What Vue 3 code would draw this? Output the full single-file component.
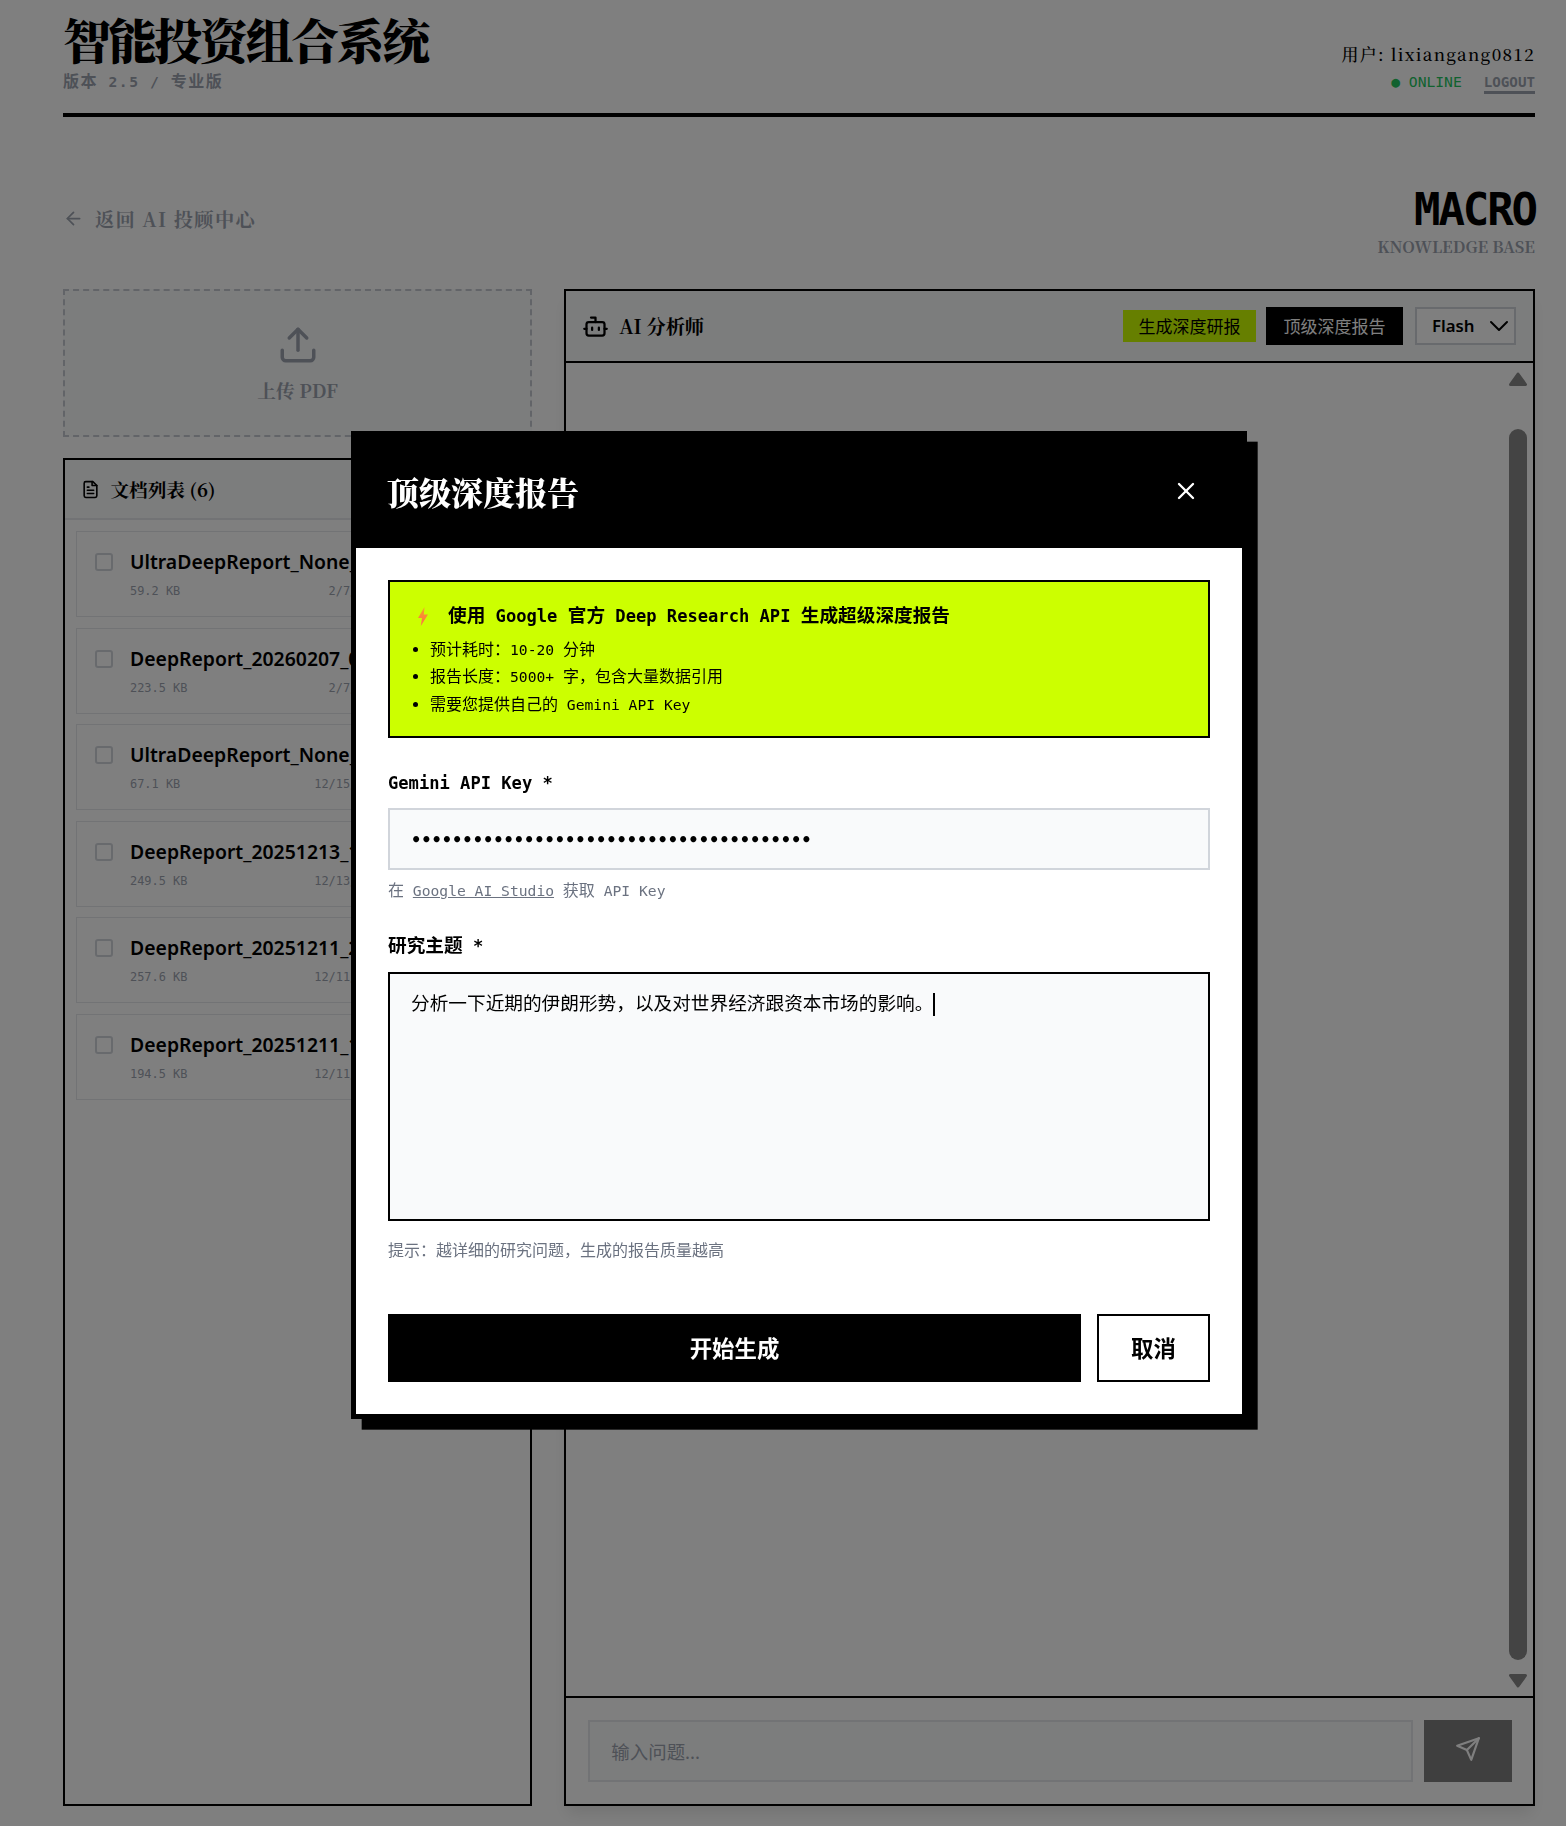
<script setup>
import { ref } from 'vue'

const docs = [
  { name: 'UltraDeepReport_None_20260207.pdf', size: '59.2 KB', date: '2/7/2026' },
  { name: 'DeepReport_20260207_093015.pdf', size: '223.5 KB', date: '2/7/2026' },
  { name: 'UltraDeepReport_None_20251215.pdf', size: '67.1 KB', date: '12/15/2025' },
  { name: 'DeepReport_20251213_181244.pdf', size: '249.5 KB', date: '12/13/2025' },
  { name: 'DeepReport_20251211_204530.pdf', size: '257.6 KB', date: '12/11/2025' },
  { name: 'DeepReport_20251211_101822.pdf', size: '194.5 KB', date: '12/11/2025' }
]

const apiKey = ref('AIzaSyD7x2mKq9vLw3nRt8bYc5pHf1sGj6uEo4A')
const notes = [
  ['预计耗时：', '10-20 ', '分钟'],
  ['报告长度：', '5000+ ', '字，包含大量数据引用'],
  ['需要您提供自己的', ' Gemini API Key', '']
]
</script>

<template>
  <div class="page">
    <header class="top">
      <div>
        <h1 class="brand">智能投资组合系统</h1>
        <div class="version">版本<span class="lat"> 2.5 / </span>专业版</div>
      </div>
      <div class="account">
        <div class="user">用户: lixiangang0812</div>
        <div class="status">
          <span class="online">● ONLINE</span>
          <a class="logout">LOGOUT</a>
        </div>
      </div>
    </header>

    <div class="subhead">
      <a class="back">
        <svg width="21" height="21" viewBox="0 0 24 24" fill="none" stroke="currentColor" stroke-width="2" stroke-linecap="round" stroke-linejoin="round"><path d="M19 12H5" /><path d="M12 19l-7-7 7-7" /></svg>
        返回 AI 投顾中心
      </a>
      <div class="macro">
        <div class="macro-title">MACRO</div>
        <div class="macro-sub">KNOWLEDGE BASE</div>
      </div>
    </div>

    <main class="grid">
      <section class="left">
        <div class="upload">
          <svg width="42" height="42" viewBox="0 0 24 24" fill="none" stroke="currentColor" stroke-width="2" stroke-linecap="round" stroke-linejoin="round"><path d="M12 3v12" /><path d="M17 8l-5-5-5 5" /><path d="M21 15v4a2 2 0 0 1-2 2H5a2 2 0 0 1-2-2v-4" /></svg>
          <span>上传 PDF</span>
        </div>
        <div class="docs">
          <div class="docs-head">
            <svg width="19" height="19" viewBox="0 0 24 24" fill="none" stroke="currentColor" stroke-width="2" stroke-linecap="round" stroke-linejoin="round"><path d="M15 2H6a2 2 0 0 0-2 2v16a2 2 0 0 0 2 2h12a2 2 0 0 0 2-2V7z" /><path d="M14 2v5h6" /><path d="M8 13h8" /><path d="M8 17h8" /><path d="M8 9h2" /></svg>
            <span>文档列表 (6)</span>
          </div>
          <div class="doc-list">
            <div v-for="doc in docs" :key="doc.name" class="doc">
              <span class="check"></span>
              <div class="doc-body">
                <div class="doc-name">{{ doc.name }}</div>
                <div class="doc-meta"><span>{{ doc.size }}</span><span>{{ doc.date }}</span></div>
              </div>
            </div>
          </div>
        </div>
      </section>

      <section class="chat">
        <div class="chat-head">
          <div class="chat-title">
            <svg width="27" height="27" viewBox="0 0 24 24" fill="none" stroke="currentColor" stroke-width="2" stroke-linecap="round" stroke-linejoin="round"><path d="M12 8V4H8" /><rect x="4" y="8" width="16" height="12" rx="2" /><path d="M2 14h2" /><path d="M20 14h2" /><path d="M15 13v2" /><path d="M9 13v2" /></svg>
            <span>AI 分析师</span>
          </div>
          <div class="chat-actions">
            <button class="btn-lime">生成深度研报</button>
            <button class="btn-black">顶级深度报告</button>
            <div class="model">
              <span>Flash</span>
              <svg width="24" height="24" viewBox="0 0 24 24" fill="none" stroke="#000" stroke-width="2" stroke-linecap="round" stroke-linejoin="round"><path d="M4 8l8 8 8-8" /></svg>
            </div>
          </div>
        </div>
        <div class="messages">
          <div class="scrollbar">
            <svg width="18" height="14" viewBox="0 0 18 14"><path d="M9 2l7.5 10.5h-15z" fill="#888" stroke="#888" stroke-width="3" stroke-linejoin="round" /></svg>
            <span class="thumb"></span>
            <svg width="18" height="14" viewBox="0 0 18 14"><path d="M9 12L1.5 1.5h15z" fill="#888" stroke="#888" stroke-width="3" stroke-linejoin="round" /></svg>
          </div>
        </div>
        <div class="chat-input">
          <div class="ask">输入问题...</div>
          <button class="send">
            <svg width="26" height="26" viewBox="0 0 24 24" fill="none" stroke="currentColor" stroke-width="2" stroke-linecap="round" stroke-linejoin="round"><path d="M22 2L15 22l-4-9-9-4z" /><path d="M22 2L11 13" /></svg>
          </button>
        </div>
      </section>
    </main>

    <div class="overlay">
      <div class="modal">
        <div class="modal-head">
          <h2>顶级深度报告</h2>
          <svg width="28" height="28" viewBox="0 0 24 24" fill="none" stroke="#fff" stroke-width="2" stroke-linecap="round" stroke-linejoin="round"><path d="M18 6L6 18" /><path d="M6 6l12 12" /></svg>
        </div>
        <div class="modal-body">
          <div class="callout">
            <div class="callout-title">
              <svg width="12" height="19" viewBox="0 0 12 19">
                <defs><linearGradient id="bolt" x1="0" y1="0" x2="0" y2="1"><stop offset="0" stop-color="#f5a623" /><stop offset="1" stop-color="#ff6b4a" /></linearGradient></defs>
                <path d="M7.5 0L1 11h4L3.8 19 11 7.5H6.8z" fill="url(#bolt)" />
              </svg>
              <span>使用<span class="lat"> Google </span>官方<span class="lat"> Deep Research API </span>生成超级深度报告</span>
            </div>
            <ul>
              <li v-for="note in notes" :key="note[1]">{{ note[0] }}<span class="lat">{{ note[1] }}</span>{{ note[2] }}</li>
            </ul>
          </div>

          <label class="field-label"><span class="lat">Gemini API Key *</span></label>
          <input v-model="apiKey" class="key" type="password" />
          <div class="help">在<span class="lat">&nbsp;</span><a class="lat">Google AI Studio</a><span class="lat">&nbsp;</span>获取<span class="lat"> API Key</span></div>

          <label class="field-label topic-label">研究主题<span class="lat"> *</span></label>
          <div class="topic">分析一下近期的伊朗形势，以及对世界经济跟资本市场的影响。<i class="caret"></i></div>
          <div class="hint">提示：越详细的研究问题，生成的报告质量越高</div>

          <div class="modal-actions">
            <button class="start">开始生成</button>
            <button class="cancel">取消</button>
          </div>
        </div>
      </div>
    </div>
  </div>
</template>

<style scoped>
.page {
  height: 1826px;
  box-sizing: border-box;
  padding: 0 31px 20px 63px;
  overflow: hidden;
  background: #fff;
  font-family: "Noto Sans", "Noto Sans CJK SC", sans-serif;
  color: #000;
}

.top {
  display: flex;
  justify-content: space-between;
  align-items: flex-end;
  height: 113px;
  border-bottom: 4px solid #000;
}

.brand {
  margin: 12px 0 0;
  font-family: "Noto Serif CJK SC", "Liberation Serif", "Noto Sans CJK SC", serif;
  font-size: 48px;
  line-height: 54px;
  font-weight: 900;
  letter-spacing: -2.4px;
}

.version {
  margin-top: 6px;
  font-family: "DejaVu Sans Mono", "Noto Sans CJK SC", monospace;
  font-size: 16px;
  line-height: 20px;
  font-weight: 700;
  color: #9ca3af;
  letter-spacing: 1.55px;
  padding-bottom: 21px;
}

.lat {
  font-size: 0.9167em;
}

.account {
  text-align: right;
  padding-bottom: 19px;
}

.user {
  font-family: "Noto Serif CJK SC", "Liberation Serif", "Noto Sans CJK SC", serif;
  font-size: 17px;
  letter-spacing: 1.3px;
  font-weight: 500;
}

.status {
  display: flex;
  justify-content: flex-end;
  gap: 22px;
  margin-top: 7px;
  font-family: "DejaVu Sans Mono", monospace;
  font-size: 14.67px;
  line-height: 18px;
}

.online {
  color: #22c55e;
}

.logout {
  font-weight: 700;
  font-size: 14.2px;
  color: #9ca3af;
  border-bottom: 3px solid #9ca3af;
}

.subhead {
  display: flex;
  justify-content: space-between;
  align-items: flex-start;
  height: 172px;
}

.back {
  display: flex;
  align-items: center;
  gap: 11px;
  margin-top: 88px;
  font-family: "Noto Serif CJK SC", "Liberation Serif", "Noto Sans CJK SC", serif;
  font-size: 19.2px;
  font-weight: 700;
  letter-spacing: 1.4px;
  color: #9ca3af;
}

.macro {
  margin-top: 68px;
  text-align: right;
}

.macro-title {
  font-family: "DejaVu Sans Mono", monospace;
  font-size: 44px;
  line-height: 50px;
  font-weight: 700;
  letter-spacing: -2.1px;
  margin-right: -1px;
}

.macro-sub {
  font-family: "Noto Serif CJK SC", "Liberation Serif", serif;
  font-size: 16px;
  font-weight: 700;
  color: #9ca3af;
}

.grid {
  display: grid;
  grid-template-columns: repeat(12, 1fr);
  gap: 32px;
  height: 1517px;
}

.left {
  grid-column: span 4;
  display: flex;
  flex-direction: column;
  gap: 21px;
  min-height: 0;
}

.upload {
  height: 148px;
  box-sizing: border-box;
  border: 2px dashed #c4c8d0;
  background: #f9fafb;
  display: flex;
  flex-direction: column;
  align-items: center;
  justify-content: center;
  gap: 11px;
  color: #9ca3af;
  font-family: "Noto Serif CJK SC", "Liberation Serif", "Noto Sans CJK SC", serif;
  font-size: 18.67px;
  font-weight: 700;
}

.docs {
  flex: 1;
  min-height: 0;
  border: 2px solid #000;
  overflow: hidden;
  background: #fff;
}

.docs-head {
  height: 58px;
  display: flex;
  align-items: center;
  gap: 10.5px;
  padding: 0 16px;
  background: #f9fafb;
  border-bottom: 2px solid #e5e7eb;
  font-family: "Noto Serif CJK SC", "Liberation Serif", "Noto Sans CJK SC", serif;
  font-size: 18.6px;
  font-weight: 700;
}

.doc-list {
  display: flex;
  flex-direction: column;
  gap: 10.6px;
  padding: 11px 11px;
}

.doc {
  display: flex;
  gap: 17px;
  height: 86px;
  box-sizing: border-box;
  padding: 20px 18px 0;
  border: 1px solid #e5e7eb;
  background: #fff;
}

.check {
  flex: none;
  width: 18px;
  height: 18px;
  margin-top: 1px;
  box-sizing: border-box;
  border: 2px solid #d1d5db;
  border-radius: 3px;
}

.doc-body {
  min-width: 0;
  overflow: hidden;
}

.doc-name {
  font-size: 19.4px;
  line-height: 20px;
  font-weight: 600;
  white-space: nowrap;
}

.doc-meta {
  display: flex;
  justify-content: space-between;
  width: 256px;
  margin-top: 12px;
  font-family: "DejaVu Sans Mono", monospace;
  font-size: 11.93px;
  line-height: 14px;
  color: #9ca3af;
}

.chat {
  grid-column: span 8;
  display: flex;
  flex-direction: column;
  border: 2px solid #000;
  background: #fff;
  box-shadow: 0 10px 15px -3px rgba(0, 0, 0, 0.1);
}

.chat-head {
  height: 70px;
  display: flex;
  align-items: center;
  justify-content: space-between;
  padding: 0 17px 0 16px;
  background: #f9fafb;
  border-bottom: 2px solid #000;
}

.chat-title {
  display: flex;
  align-items: center;
  gap: 10px;
  font-family: "Noto Serif CJK SC", "Liberation Serif", "Noto Sans CJK SC", serif;
  font-size: 19.2px;
  font-weight: 700;
}

.chat-title span {
  padding-bottom: 2px;
}

.chat-actions {
  display: flex;
  align-items: center;
  gap: 10px;
}

button {
  border: 0;
  padding: 0;
  font-family: "Noto Sans", "Noto Sans CJK SC", sans-serif;
}

.btn-lime {
  width: 133px;
  height: 32px;
  padding-bottom: 2px;
  background: #ccff00;
  font-size: 17px;
  color: #000;
}

.btn-black {
  width: 137px;
  height: 38px;
  padding-bottom: 2px;
  background: #000;
  font-size: 17px;
  color: #fff;
}

.model {
  width: 101px;
  height: 38px;
  box-sizing: border-box;
  margin-left: 2px;
  border: 2px solid #d1d5db;
  background: #fff;
  display: flex;
  align-items: center;
  justify-content: space-between;
  padding: 0 3px 0 15px;
  font-size: 16.8px;
  font-weight: 600;
}

.model span {
  padding-bottom: 2px;
}

.messages {
  flex: 1;
  display: flex;
  justify-content: flex-end;
  padding: 9px 6px 8px 0;
  min-height: 0;
}

.scrollbar {
  width: 18px;
  display: flex;
  flex-direction: column;
  align-items: center;
}

.thumb {
  flex: 1;
  width: 18px;
  margin: 43px 0 14px;
  border-radius: 9px;
  background: #888;
}

.chat-input {
  display: flex;
  gap: 11px;
  padding: 22px 21px 22px 22px;
  border-top: 2px solid #000;
}

.ask {
  flex: 1;
  height: 62px;
  box-sizing: border-box;
  border: 2px solid #e5e7eb;
  background: #f9fafb;
  padding: 0 21px;
  display: flex;
  align-items: center;
  font-size: 18.46px;
  color: #9ca3af;
}

.send {
  width: 88px;
  height: 62px;
  background: #000;
  opacity: 0.5;
  color: #fff;
}

.overlay {
  position: fixed;
  inset: 0;
  display: flex;
  align-items: center;
  justify-content: center;
  padding: 24px 0 0 32px;
  background: rgba(0, 0, 0, 0.5);
}

.modal {
  width: 896px;
  box-sizing: border-box;
  border: 5px solid #000;
  background: #fff;
  box-shadow: 10.67px 10.67px 0 #000;
}

.modal-head {
  height: 112px;
  box-sizing: border-box;
  padding: 0 42px 2px 31px;
  display: flex;
  align-items: center;
  justify-content: space-between;
  background: #000;
  color: #fff;
}

.modal-head h2 {
  margin: 0;
  font-family: "Noto Serif CJK SC", "Liberation Serif", "Noto Sans CJK SC", serif;
  font-size: 32px;
  font-weight: 900;
}

.modal-body {
  padding: 32px 32px 32px;
}

.callout {
  height: 158px;
  box-sizing: border-box;
  border: 2px solid #000;
  background: #ccff00;
  padding: 22px 21px;
  font-family: "DejaVu Sans Mono", "Noto Sans CJK SC", monospace;
}

.callout-title {
  display: flex;
  align-items: center;
  gap: 19px;
  padding-left: 6px;
  font-size: 18.67px;
  line-height: 24px;
  font-weight: 700;
}

.callout ul {
  margin: 8px 0 0;
  padding: 0 0 0 19px;
  font-size: 16px;
  line-height: 27.3px;
}

.field-label {
  display: block;
  margin-top: 33px;
  font-family: "DejaVu Sans Mono", "Noto Sans CJK SC", monospace;
  font-size: 18.67px;
  line-height: 24px;
  font-weight: 700;
}

.key {
  display: block;
  width: 100%;
  height: 62px;
  box-sizing: border-box;
  margin-top: 13px;
  padding: 1px 21px 0;
  border: 2px solid #d1d5db;
  border-radius: 0;
  outline: none;
  background: #f9fafb;
  font-family: "DejaVu Sans Mono", monospace;
  font-size: 17.07px;
  font-weight: 700;
  color: #000;
}

.help {
  margin-top: 10px;
  font-family: "DejaVu Sans Mono", "Noto Sans CJK SC", monospace;
  font-size: 16px;
  line-height: 22px;
  color: #6b7280;
}

.help a {
  text-decoration: underline;
}

.topic-label {
  margin-top: 32px;
}

.topic {
  height: 249px;
  box-sizing: border-box;
  margin-top: 14px;
  padding: 14px 21px;
  border: 2px solid #000;
  background: #f9fafb;
  font-family: "Noto Sans CJK SC", sans-serif;
  font-size: 18.67px;
  line-height: 28px;
}

.caret {
  display: inline-block;
  width: 2px;
  height: 23px;
  background: #000;
  vertical-align: middle;
}

.hint {
  margin-top: 17px;
  font-family: "Noto Sans CJK SC", sans-serif;
  font-size: 16px;
  line-height: 22px;
  color: #6b7280;
}

.modal-actions {
  display: flex;
  gap: 16px;
  margin-top: 54px;
}

.start,
.cancel {
  height: 68px;
  padding-bottom: 2px;
  font-size: 22.4px;
  font-weight: 700;
}

.start {
  flex: 1;
  background: #000;
  color: #fff;
}

.cancel {
  width: 113px;
  box-sizing: border-box;
  border: 2px solid #000;
  background: #fff;
  color: #000;
}
</style>
